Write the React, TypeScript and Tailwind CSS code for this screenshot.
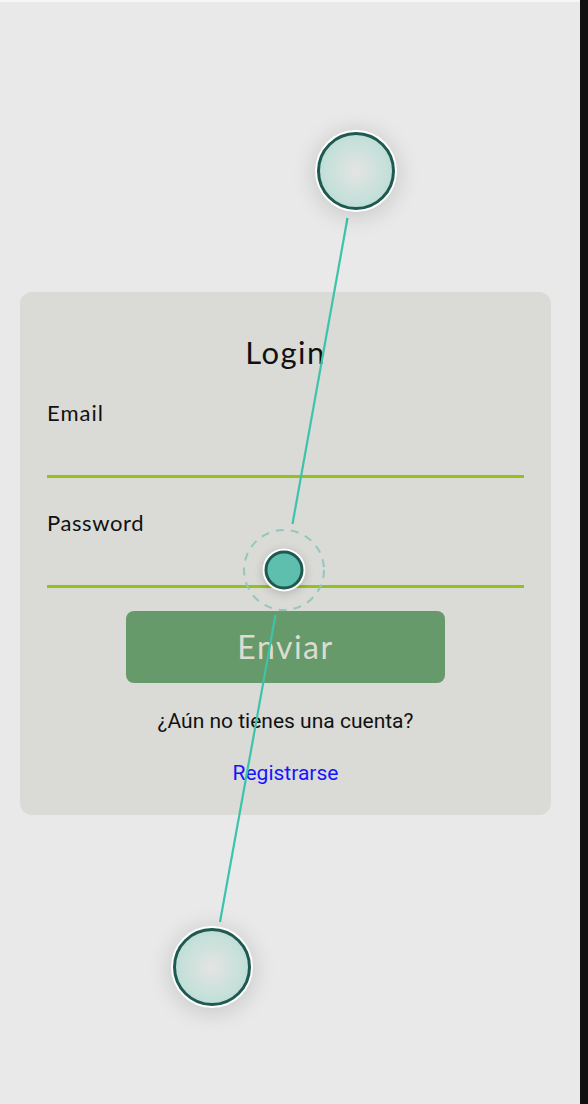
import React from "react";

const Node = ({ x, y }: { x: number; y: number }) => (
  <div
    className="absolute w-[82px] h-[82px] rounded-full bg-white p-[2px] shadow-[0_3px_24px_rgba(0,0,0,0.16)] -translate-x-1/2 -translate-y-1/2"
    style={{ left: x, top: y }}
  >
    <div className="w-full h-full rounded-full border-[3px] border-[#1f5a50] bg-[radial-gradient(circle,#e4e4e2_0%,#c6e0da_60%,#acd6cc_100%)]" />
  </div>
);

export default function App() {
  return (
    <div className="flex w-[588px] h-[1104px] bg-[#e9e9e9]">
      <div className="relative flex-1 flex flex-col">
        <div className="h-[2px] bg-[#f6f6f6]" />
        <div className="flex-1 flex items-center">
          <div className="ml-5 w-[531px] h-[523px] rounded-xl bg-[#dadad6] flex flex-col items-center pt-[42px] font-['Lato',sans-serif]">
            <h1 className="text-[31px] leading-[36px] text-[#111] tracking-[1.5px]">Login</h1>
            <div className="w-full px-[27px] mt-[29px]">
              <label className="block text-[22px] leading-[28px] text-[#111] tracking-[1px]">Email</label>
              <div className="h-[48px]" />
              <div className="h-[3px] bg-[#94c11c]" />
              <label className="block mt-[31px] text-[22px] leading-[28px] text-[#111] tracking-[0.6px]">Password</label>
              <div className="h-[48px]" />
              <div className="h-[3px] bg-[#94c11c]" />
            </div>
            <button className="mt-[23px] w-[319px] h-[72px] rounded-lg bg-[#669a6a] text-[32px] text-[#dcdccf] tracking-[1.5px]">
              Enviar
            </button>
            <p className="mt-[26px] text-[21px] leading-[24px] text-[#111] font-['Roboto',sans-serif]">
              ¿Aún no tienes una cuenta?
            </p>
            <a className="mt-[28px] text-[21px] leading-[24px] text-[#1515ff] font-['Roboto',sans-serif]">Registrarse</a>
          </div>
        </div>

        <svg className="absolute inset-0 w-full h-full pointer-events-none" viewBox="0 0 580 1104">
          <line x1="347.5" y1="218" x2="292.5" y2="524" stroke="#3cc4aa" strokeWidth="2.2" />
          <line x1="275.5" y1="615" x2="220" y2="922" stroke="#3cc4aa" strokeWidth="2.2" />
          <circle cx="284" cy="570" r="40" fill="none" stroke="#94c6bf" strokeWidth="2" strokeDasharray="8 7" />
        </svg>

        <Node x={356} y={171} />
        <Node x={212} y={967} />
        <div className="absolute left-[284px] top-[570px] w-[43px] h-[43px] rounded-full bg-white p-[2px] shadow-[0_2px_10px_rgba(0,0,0,0.18)] -translate-x-1/2 -translate-y-1/2">
          <div className="w-full h-full rounded-full border-[3px] border-[#1f5a50] bg-[#5fbfae]" />
        </div>
      </div>
      <div className="w-2 bg-[#111]" />
    </div>
  );
}
